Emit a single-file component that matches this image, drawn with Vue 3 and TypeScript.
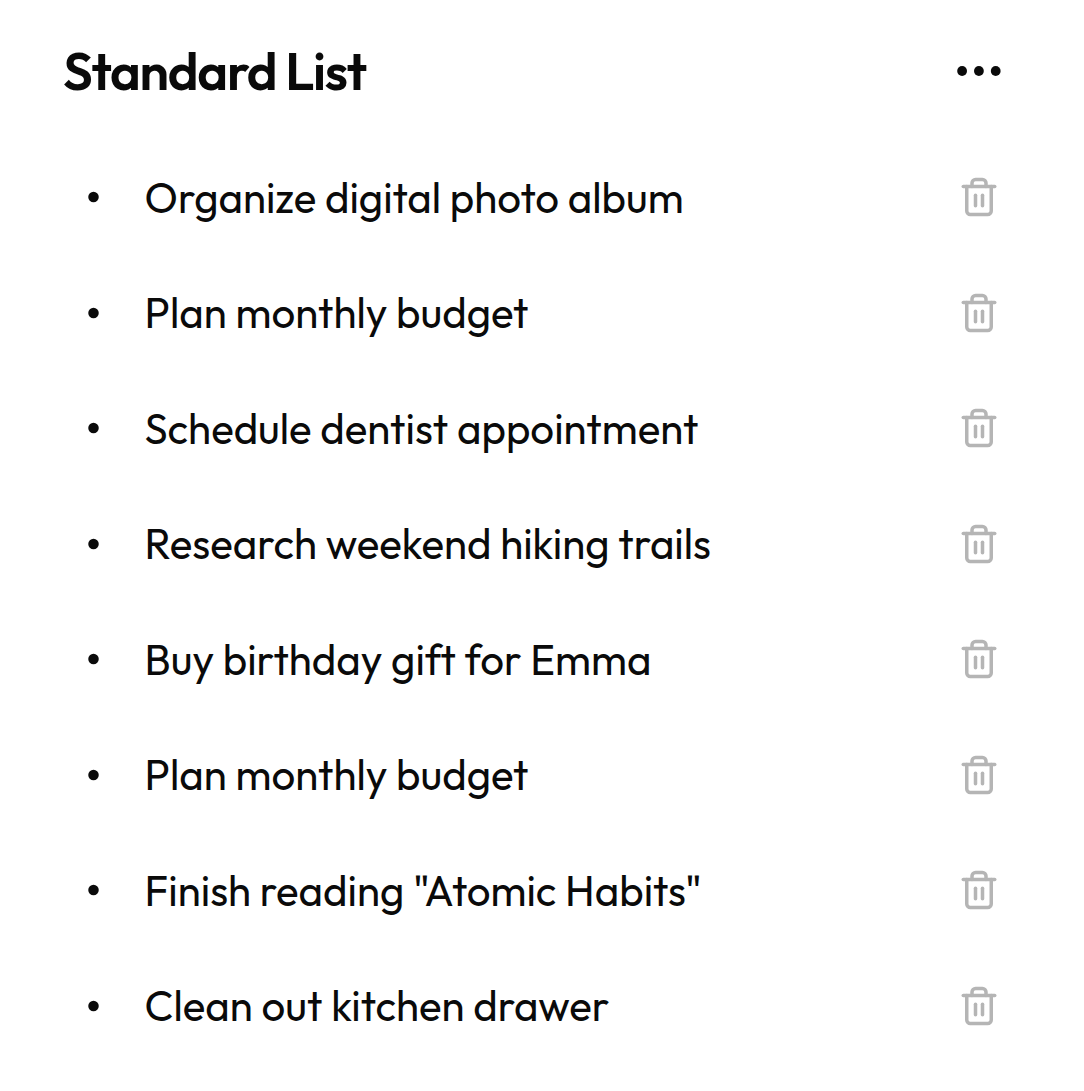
<script setup lang="ts">
const items: string[] = [
  'Organize digital photo album',
  'Plan monthly budget',
  'Schedule dentist appointment',
  'Research weekend hiking trails',
  'Buy birthday gift for Emma',
  'Plan monthly budget',
  'Finish reading "Atomic Habits"',
  'Clean out kitchen drawer',
]
</script>

<template>
  <main class="card">
    <header class="header">
      <h1 class="title">Standard List</h1>
      <button class="more" type="button" aria-label="More options">
        <svg width="44" height="12" viewBox="0 0 44 12" fill="currentColor">
          <circle cx="5.1" cy="6" r="4.9" />
          <circle cx="21.9" cy="6" r="4.9" />
          <circle cx="38.7" cy="6" r="4.9" />
        </svg>
      </button>
    </header>
    <ul class="list">
      <li v-for="(item, i) in items" :key="i" class="row">
        <svg class="bullet" width="12" height="12" viewBox="0 0 12 12" fill="currentColor">
          <circle cx="6.5" cy="6" r="5.25" />
        </svg>
        <span class="label">{{ item }}</span>
        <button class="delete" type="button" aria-label="Delete">
          <svg width="42" height="42" viewBox="0 0 24 24" fill="none" stroke="currentColor" stroke-width="2" stroke-linecap="round" stroke-linejoin="round">
            <path d="M3 6h18" />
            <path d="M19 6v14c0 1-1 2-2 2H7c-1 0-2-1-2-2V6" />
            <path d="M8 6V4c0-1 1-2 2-2h4c1 0 2 1 2 2v2" />
            <path d="M10 11v6" />
            <path d="M14 11v6" />
          </svg>
        </button>
      </li>
    </ul>
  </main>
</template>

<style>
body {
  margin: 0;
  background: #fff;
}
</style>

<style scoped>
.card {
  box-sizing: border-box;
  width: 1084px;
  height: 1091px;
  overflow: hidden;
  padding: 0 83px 0 63px;
  background: #fff;
  color: #0a0a0a;
  font-family: Outfit, Inter, Lato, sans-serif;
}
.header {
  display: flex;
  align-items: center;
  justify-content: space-between;
  height: 139.5px;
}
.title {
  margin: 0;
  padding-top: 3px;
  font-size: 52.5px;
  font-weight: 600;
  line-height: 66px;
  letter-spacing: -0.025em;
  white-space: nowrap;
}
.more,
.delete {
  display: flex;
  margin: 0;
  padding: 0;
  border: 0;
  background: none;
}
.more {
  padding-top: 2px;
  color: #0a0a0a;
}
.list {
  margin: 0;
  padding: 0;
  list-style: none;
}
.row {
  display: flex;
  align-items: center;
  height: 115.5px;
}
.bullet {
  flex: none;
  overflow: visible;
  margin: 0 45.2px 0 24.4px;
}
.label {
  flex: 1;
  padding-top: 0.7px;
  font-size: 42px;
  line-height: 52px;
  white-space: nowrap;
}
.delete {
  margin-right: 1px;
  color: #b5b5b5;
}
</style>
